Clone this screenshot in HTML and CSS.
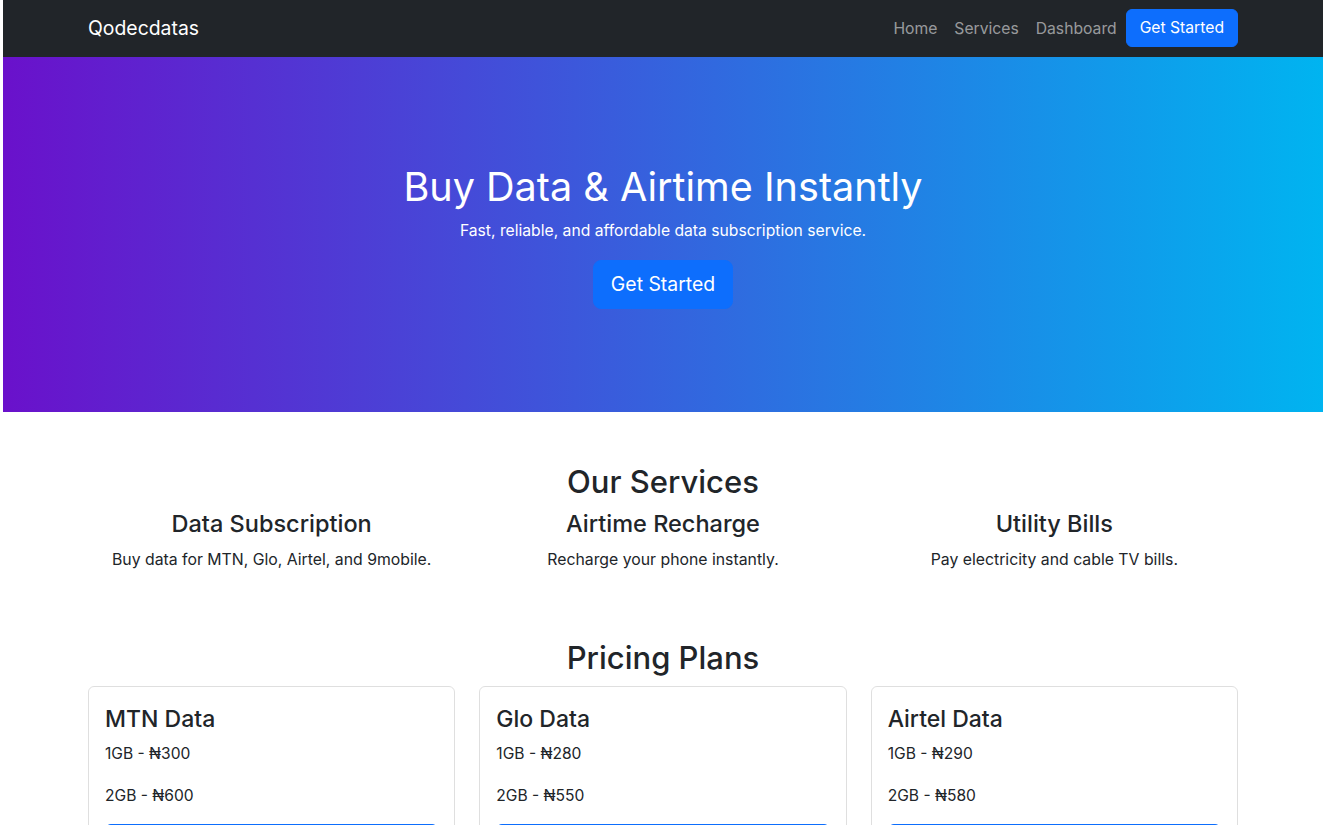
FILE: index.html
```html
<!DOCTYPE html>
<html lang="en">
<head>
<meta charset="utf-8">
<title>Qodecdatas</title>
<link rel="stylesheet" href="styles.css">
</head>
<body>
<div class="page">
  <nav class="navbar">
    <div class="container nav-inner">
      <a class="brand" href="#">Qodecdatas</a>
      <div class="nav-links">
        <a class="nav-link" href="#">Home</a>
        <a class="nav-link" href="#">Services</a>
        <a class="nav-link" href="#">Dashboard</a>
        <a class="btn btn-primary nav-btn" href="#">Get Started</a>
      </div>
    </div>
  </nav>

  <header class="hero">
    <h1 class="hero-title">Buy Data &amp; Airtime Instantly</h1>
    <p class="hero-sub">Fast, reliable, and affordable data subscription service.</p>
    <a class="btn btn-primary btn-lg" href="#">Get Started</a>
  </header>

  <section class="services container">
    <h2 class="section-title">Our Services</h2>
    <div class="row">
      <div class="col center">
        <h4 class="service-title">Data Subscription</h4>
        <p class="service-text">Buy data for MTN, Glo, Airtel, and 9mobile.</p>
      </div>
      <div class="col center">
        <h4 class="service-title">Airtime Recharge</h4>
        <p class="service-text">Recharge your phone instantly.</p>
      </div>
      <div class="col center">
        <h4 class="service-title">Utility Bills</h4>
        <p class="service-text">Pay electricity and cable TV bills.</p>
      </div>
    </div>
  </section>

  <section class="pricing container">
    <h2 class="section-title">Pricing Plans</h2>
    <div class="row">
      <div class="col">
        <div class="card">
          <h4 class="card-title">MTN Data</h4>
          <p class="card-text">1GB - ₦300</p>
          <p class="card-text">2GB - ₦600</p>
          <a class="btn btn-primary btn-block" href="#">Buy Now</a>
        </div>
      </div>
      <div class="col">
        <div class="card">
          <h4 class="card-title">Glo Data</h4>
          <p class="card-text">1GB - ₦280</p>
          <p class="card-text">2GB - ₦550</p>
          <a class="btn btn-primary btn-block" href="#">Buy Now</a>
        </div>
      </div>
      <div class="col">
        <div class="card">
          <h4 class="card-title">Airtel Data</h4>
          <p class="card-text">1GB - ₦290</p>
          <p class="card-text">2GB - ₦580</p>
          <a class="btn btn-primary btn-block" href="#">Buy Now</a>
        </div>
      </div>
    </div>
  </section>
</div>
</body>
</html>
```

FILE: styles.css
```css
* { box-sizing: border-box; }

html, body {
  margin: 0;
  padding: 0;
  background: #fff;
}

body {
  font-family: Inter, Roboto, "Noto Sans", "Liberation Sans", sans-serif;
  font-size: 16px;
  line-height: 1.5;
  color: #212529;
}

.page {
  width: 1320px;
  margin-left: 3px;
}

.container {
  width: 1150px;
  margin: 0 auto;
}

a { text-decoration: none; }

.navbar {
  background: #212529;
  height: 57px;
}

.nav-inner {
  height: 57px;
  display: flex;
  align-items: center;
  justify-content: space-between;
}

.brand {
  color: #fff;
  font-size: 19.4px;
  line-height: 1;
}

.nav-links {
  display: flex;
  align-items: center;
}

.nav-link {
  color: rgba(255, 255, 255, 0.55);
  font-size: 15.7px;
  padding: 0 8.5px;
}

.btn {
  display: inline-block;
  color: #fff;
  border-radius: 6px;
  text-align: center;
}

.btn-primary {
  background: #0d6efd;
  border: 1px solid #0d6efd;
}

.nav-btn {
  font-size: 15.7px;
  line-height: 22px;
  padding: 7px 13px;
  margin-left: 0.5px;
  margin-top: -1px;
}

.hero {
  height: 355px;
  background: linear-gradient(90deg, #6a11cb 0%, #00b4f0 100%);
  color: #fff;
  text-align: center;
  padding-top: 106px;
}

.hero-title {
  margin: 0 0 9px;
  font-size: 39.6px;
  font-weight: 400;
  line-height: 48px;
}

.hero-sub {
  margin: 0 0 18px;
  font-size: 15.7px;
  line-height: 22px;
}

.btn-lg {
  font-size: 19.4px;
  line-height: 29px;
  padding: 9px 17px;
  border-radius: 8px;
}

.services {
  padding-top: 50px;
}

.section-title {
  margin: 0;
  text-align: center;
  font-size: 31px;
  font-weight: 500;
  line-height: 40px;
}

.services .section-title {
  margin-bottom: 8px;
}

.row {
  display: flex;
  margin: 0 -12px;
}

.col {
  flex: 1 1 0;
  padding: 0 12px;
}

.center { text-align: center; }

.service-title {
  margin: 0 0 11px;
  font-size: 23.5px;
  font-weight: 500;
  line-height: 28px;
}

.service-text {
  margin: 0;
  font-size: 15.8px;
  line-height: 22px;
}

.pricing {
  padding-top: 67px;
}

.pricing .section-title {
  margin-bottom: 8px;
}

.card {
  border: 1px solid rgba(0, 0, 0, 0.125);
  border-radius: 6px;
  padding: 18px 16px 16px;
  min-height: 200px;
}

.card-title {
  margin: 0 0 10px;
  font-size: 23px;
  font-weight: 500;
  line-height: 28px;
}

.card-text {
  margin: 0 0 20px;
  font-size: 15.6px;
  line-height: 22px;
}

.btn-block {
  display: block;
  width: 100%;
  font-size: 15.7px;
  line-height: 22px;
  padding: 7px 12px;
  margin-top: -3px;
}
```
